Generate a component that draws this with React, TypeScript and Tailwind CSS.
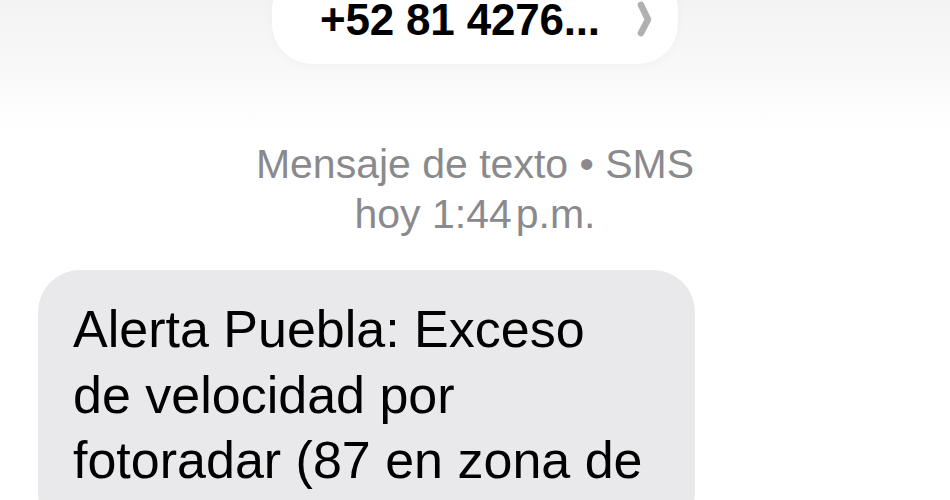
function Chevron() {
  return (
    <svg viewBox="0 0 20 40" className="h-[40px] w-[20px] shrink-0" aria-hidden>
      <polyline
        points="8,5 15,19.5 8,33"
        fill="none"
        stroke="#b0b0b0"
        strokeWidth="6.5"
        strokeLinecap="round"
        strokeLinejoin="round"
      />
    </svg>
  )
}

export default function App() {
  return (
    <div
      className="relative flex h-[500px] w-[950px] flex-col items-center overflow-hidden bg-white"
      style={{ fontFamily: '"Liberation Sans", Arial, sans-serif' }}
    >
      <div className="absolute inset-x-0 top-0 h-[130px] bg-gradient-to-b from-[#f3f3f3] via-[#f8f8f8] to-white" />

      <div className="relative -mt-[30px] flex h-[94px] w-[406px] shrink-0 items-end rounded-[40px] bg-white pb-[22px] pl-[48px] shadow-[0_2px_10px_rgba(0,0,0,0.03)]">
        <span className="text-[44px] font-bold leading-[44px] tracking-[-0.2px] text-black">
          +52 81 4276...
        </span>
        <span className="mb-[2px] ml-[33px]">
          <Chevron />
        </span>
      </div>

      <div className="relative mt-[75px] flex shrink-0 flex-col items-center text-[41px] leading-[50px] text-[#8a8a8e]">
        <span>Mensaje de texto • SMS</span>
        <span>
          hoy 1:44<span className="ml-[4px]">p.m.</span>
        </span>
      </div>

      <div className="relative mt-[31px] w-full shrink-0 pl-[38px]">
        <div className="w-[657px] rounded-[42px] bg-[#e9e9eb] pb-[40px] pl-[35px] pr-[30px] pt-[27px] text-[52px] leading-[65.5px] text-black whitespace-nowrap">
          Alerta Puebla: Exceso
          <br />
          de velocidad por
          <br />
          fotoradar (87 en zona de
        </div>
      </div>
    </div>
  )
}
